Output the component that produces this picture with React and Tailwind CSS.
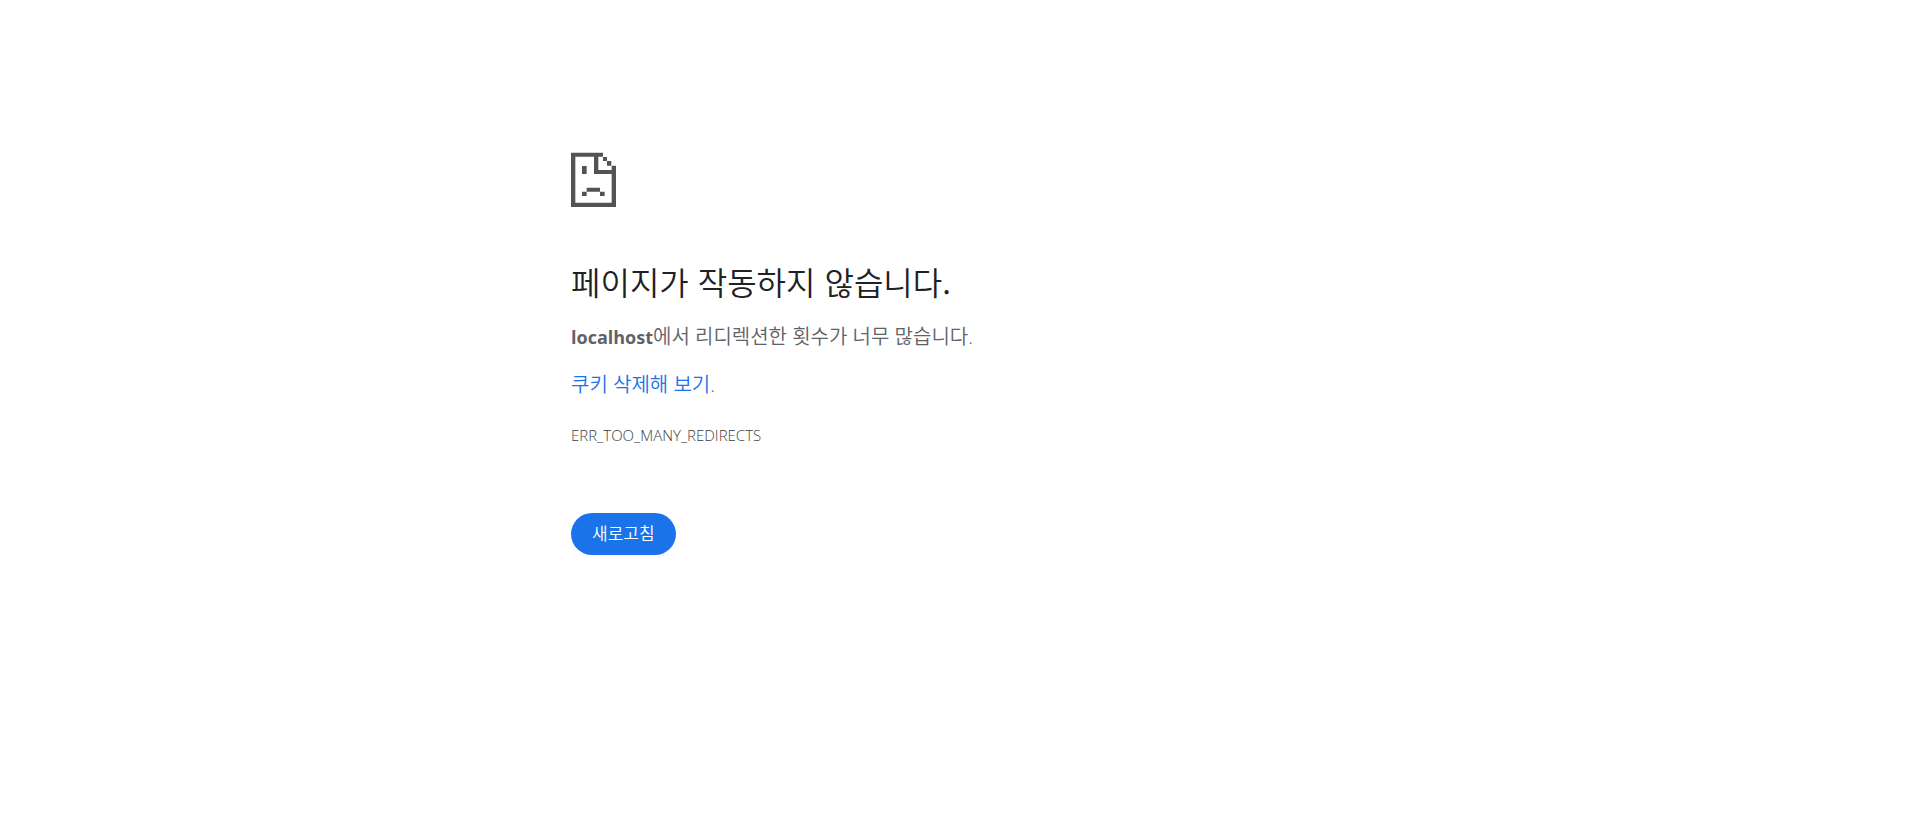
import React from 'react';

const SadPage = () => (
  <svg width="45" height="55" viewBox="0 0 135 165" fill="#535353" aria-hidden="true">
    <path d="M0 2H96V14H82V54H122V41H135V165H0ZM13 14V152H122V66H69V14Z" fillRule="evenodd" />
    {/* folded corner */}
    <path d="M96 15h12v12h-12zM108 27h13v14h-13z" />
    {/* face */}
    <path d="M33 42h14v24h-14zM47 107h40v12h-40zM33 119h14v13h-14zM87 119h14v13h-14z" />
  </svg>
);

const App = () => {
  const handleReload = () => window.location.reload();

  return (
    <div lang="ko" className="min-h-screen bg-white text-[#5f6368] font-['Open_Sans','Noto_Sans_CJK_KR',sans-serif]">
      <main className="mx-auto w-full max-w-[763px] pt-38">
        <SadPage />

        <h1 className="mt-13 text-[32px] leading-11 font-[350] text-[#202124] font-['Noto_Sans_CJK_KR',sans-serif]">
          페이지가 작동하지 않습니다.
        </h1>

        <p className="mt-5 text-[20px] leading-7 font-[350]">
          <strong className="font-bold text-[18px]">localhost</strong>에서 리디렉션한 횟수가 너무 많습니다.
        </p>

        <p className="mt-5 text-[20px] leading-7 font-[350]">
          <a href="#cookies" className="text-[#1a73e8]">쿠키 삭제해 보기</a>.
        </p>

        <div className="mt-6 text-[15px] leading-6 font-light text-[#3c4043]">ERR_TOO_MANY_REDIRECTS</div>

        <button
          type="button"
          onClick={handleReload}
          className="mt-[66px] h-[42px] rounded-full bg-[#1a73e8] px-[21px] text-[17px] font-[350] text-white"
        >
          새로고침
        </button>
      </main>
    </div>
  );
};

export default App;
